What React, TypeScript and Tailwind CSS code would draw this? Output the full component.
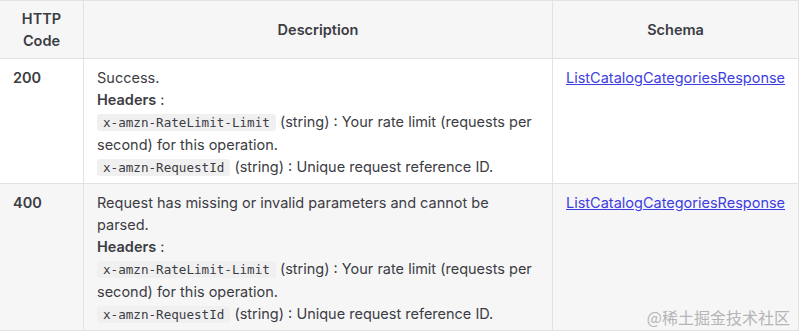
import React from 'react'

const headers = [
  { name: 'x-amzn-RateLimit-Limit', desc: 'Your rate limit (requests per second) for this operation.' },
  { name: 'x-amzn-RequestId', desc: 'Unique request reference ID.' },
]

const rows = [
  { code: '200', text: 'Success.' },
  { code: '400', text: 'Request has missing or invalid parameters and cannot be parsed.' },
]

function Code({ children }: { children: React.ReactNode }) {
  return (
    <code className="bg-[#f0f0f1] rounded-[3px] px-[6px] py-px text-[12.6px] text-[#3c3c43] font-['DejaVu_Sans_Mono',monospace]">
      {children}
    </code>
  )
}

export default function App() {
  return (
    <div className="w-[800px] h-[334px] overflow-hidden bg-white relative font-['Inter',sans-serif] text-[14.5px] leading-[22px] text-[#3c3c43]">
      <table className="-ml-px w-[800px] border-collapse table-fixed">
        <colgroup>
          <col className="w-[84px]" />
          <col className="w-[469px]" />
          <col />
        </colgroup>
        <thead>
          <tr className="bg-[#f6f6f7]">
            <th className="border border-[#e2e2e3] px-[13px] pt-[7px] pb-[6px] font-semibold text-center">HTTP Code</th>
            <th className="border border-[#e2e2e3] px-[13px] pt-[7px] pb-[6px] font-semibold text-center">Description</th>
            <th className="border border-[#e2e2e3] px-[13px] pt-[7px] pb-[6px] font-semibold text-center">Schema</th>
          </tr>
        </thead>
        <tbody>
          {rows.map((r, i) => (
            <tr key={r.code} className={i % 2 ? 'bg-[#f6f6f7]' : 'bg-white'}>
              <td className="border border-[#e2e2e3] px-[13px] pt-[8px] pb-[4px] align-top font-semibold">{r.code}</td>
              <td className="border border-[#e2e2e3] px-[13px] pt-[8px] pb-[4px] align-top">
                <div>{r.text}</div>
                <div><b className="font-semibold">Headers</b> :</div>
                {headers.map((h) => (
                  <div key={h.name}>
                    <Code>{h.name}</Code> (string) : {h.desc}
                  </div>
                ))}
              </td>
              <td className="border border-[#e2e2e3] px-[13px] pt-[8px] pb-[4px] align-top">
                <a href="#" className="text-[#3e3ee0] underline">ListCatalogCategoriesResponse</a>
              </td>
            </tr>
          ))}
        </tbody>
      </table>
      <div className="absolute right-[10px] bottom-[6px] text-[16px] text-[#b5b5b5] font-['Noto_Sans_CJK_SC',sans-serif]">@稀土掘金技术社区</div>
    </div>
  )
}
